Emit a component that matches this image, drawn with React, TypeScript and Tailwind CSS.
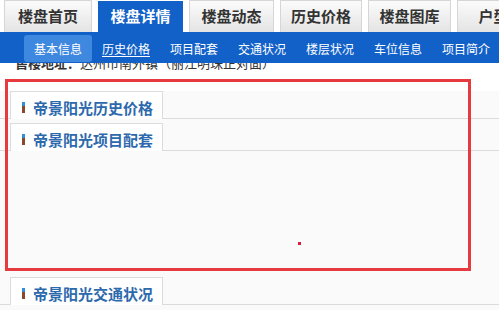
import React from "react";

const topTabs = [
  { label: "楼盘首页", w: "w-[88px]", active: false },
  { label: "楼盘详情", w: "w-[85px]", active: true },
  { label: "楼盘动态", w: "w-[85px]", active: false },
  { label: "历史价格", w: "w-[82px]", active: false },
  { label: "楼盘图库", w: "w-[83px]", active: false },
  { label: "户型图", w: "w-[88px]", active: false },
];

const subNav = ["基本信息", "历史价格", "项目配套", "交通状况", "楼层状况", "车位信息", "项目简介"];

function SectionHeader({ title }: { title: string }) {
  return (
    <div className="flex border-b border-[#dcdcdc] pl-[10px]">
      <div className="-mb-px flex h-[28px] w-[153px] items-center border border-b-0 border-[#dcdcdc] bg-white pl-[11px] pt-[3px]">
        {/* 小图标：上蓝下棕 */}
        <span className="mr-[8px] flex h-[11px] w-[3px] flex-col">
          <span className="h-[4px] w-full bg-[#2f8fdc]" />
          <span className="h-[7px] w-full bg-[#8a4a2a]" />
        </span>
        <span className="text-[15px] font-bold leading-none text-[#2d69ad]">{title}</span>
      </div>
    </div>
  );
}

export default function App() {
  return (
    <div
      className="relative h-[310px] w-[499px] overflow-hidden bg-white"
      style={{ fontFamily: '"Noto Sans CJK SC", "Liberation Sans", sans-serif' }}
    >
      {/* 顶部标签 */}
      <div className="flex h-[32px] gap-[6px] pl-[4px]">
        {topTabs.map((t) => (
          <div
            key={t.label}
            className={`${t.w} flex shrink-0 items-center justify-center text-[15px] font-bold ${
              t.active
                ? "mt-px bg-[#1261c9] text-white"
                : "border border-b-0 border-[#d6d6d6] bg-gradient-to-b from-[#fbfbfb] to-[#e4e4e4] text-[#333]"
            }`}
          >
            {t.label}
          </div>
        ))}
      </div>

      {/* 二级导航 */}
      <div className="flex h-[31px] bg-[#1261c9] pl-[24px] pt-[3px]">
        {subNav.map((s, i) => (
          <div
            key={s}
            className={`flex h-[27px] w-[68px] shrink-0 items-center justify-center rounded-[3px] text-[12px] text-white ${
              i === 0 ? "bg-[#3f88e0]" : ""
            } ${i === 1 ? "underline underline-offset-2" : ""}`}
          >
            {s}
          </div>
        ))}
      </div>

      {/* 被遮住的地址行 */}
      <div className="h-[8px] overflow-hidden pl-[15px]">
        <div className="-mt-[7px] whitespace-nowrap text-[13px] leading-[14px] text-[#333]">
          <span className="font-bold">售楼地址：</span>
          达州市南外镇（丽江明珠正对面）
        </div>
      </div>

      {/* 内容区 */}
      <div className="mt-[20px] bg-[#fafafa]">
        <div className="pb-[4px]">
          <SectionHeader title="帝景阳光历史价格" />
        </div>
        <div className="h-[154px]">
          <SectionHeader title="帝景阳光项目配套" />
        </div>
        <div className="h-[40px]">
          <SectionHeader title="帝景阳光交通状况" />
        </div>
      </div>

      {/* 红色标注框 */}
      <div className="pointer-events-none absolute left-[5px] top-[79px] h-[192px] w-[466px] border-[3px] border-[#e63a3e]" />
      <div className="absolute left-[298px] top-[242px] h-[3px] w-[3px] bg-[#d61f3c]" />
    </div>
  );
}
